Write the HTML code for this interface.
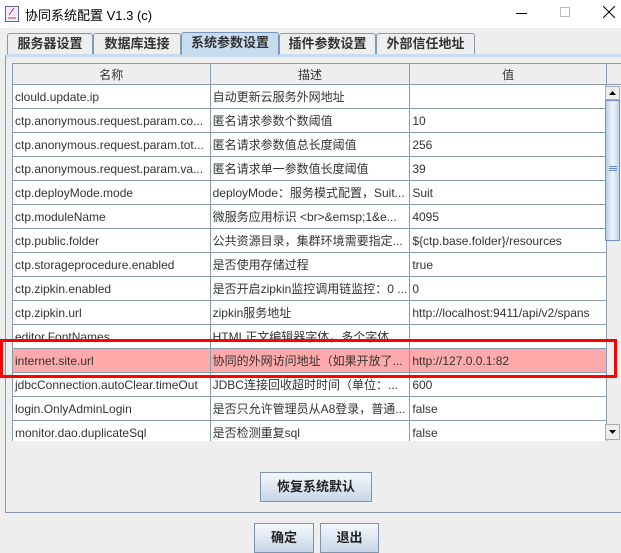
<!DOCTYPE html>
<html><head><meta charset="utf-8"><style>
*{margin:0;padding:0;box-sizing:border-box}
body{width:621px;height:543px;background:#eeeeee;font-family:"Liberation Sans","Noto Sans CJK SC",sans-serif;font-size:12px;color:#333;position:relative;overflow:hidden}
.title{position:absolute;left:0;top:0;width:621px;height:28px;background:#fff}
.title span{position:absolute;left:25px;top:5px;font-size:13px;color:#000}
.tab{position:absolute;top:33px;height:21px;border:1px solid #8899aa;border-bottom:none;background:#eeeeee;font-weight:bold;font-size:13px;text-align:center;line-height:19px;color:#333;border-radius:3px 3px 0 0}
.tab.sel{background:#c8dcf0;border-color:#7a95c0;top:32px;height:23px}
.panel{position:absolute;left:5px;top:54px;width:620px;height:459px;border:1px solid #8899aa;border-top:3px solid #c8dcf0;background:#eeeeee}
.wrap{position:absolute;left:12px;top:63px;width:610px;height:378px;overflow:hidden}
table{border-collapse:collapse;table-layout:fixed;background:#fff}
td,th{border:1px solid #8a9bb0;height:24px;padding:0 2px;white-space:nowrap;overflow:hidden;font-weight:normal;font-size:12px;color:#333}
th{background:#eeeeee;height:21px;text-align:center}
tr.hl td{background:#ffaaaa}
.btn{position:absolute;height:30px;border:1px solid #7f93ac;background:linear-gradient(#f4f8fc,#c8d6e6);font-weight:bold;font-size:13px;text-align:center;line-height:28px;color:#222}
</style></head><body>
<div class="title"><svg style="position:absolute;left:5px;top:6px" width="14" height="16"><rect x="0.5" y="0.5" width="13" height="15" fill="#eef" stroke="#668"/><path d="M3 12h8M4 9q3-4 5-7" stroke="#c33" fill="none"/></svg><span>协同系统配置 V1.3 (c)</span>
<div style="position:absolute;left:516px;top:13px;width:11px;height:1px;background:#000"></div>
<div style="position:absolute;left:560px;top:7px;width:10px;height:10px;border:1px solid #bbb"></div>
<svg style="position:absolute;left:603px;top:6px" width="12" height="12"><path d="M0 0L12 12M12 0L0 12" stroke="#000"/></svg></div>
<div class="panel"></div>
<div class="tab" style="left:7px;width:86px">服务器设置</div>
<div class="tab" style="left:93px;width:88px">数据库连接</div>
<div class="tab sel" style="left:181px;width:98px">系统参数设置</div>
<div class="tab" style="left:279px;width:97px">插件参数设置</div>
<div class="tab" style="left:376px;width:99px">外部信任地址</div>
<div class="wrap"><table>
<colgroup><col style="width:198px"><col style="width:197px"><col style="width:198px"><col style="width:16px"></colgroup>
<tr><th>名称</th><th>描述</th><th>值</th><th style="border-left:1px solid #aaa"></th></tr>
<tr><td>clould.update.ip</td><td>自动更新云服务外网地址</td><td></td><td rowspan="15" style="padding:0;background:#eee;vertical-align:top;position:relative"></td></tr>
<tr><td>ctp.anonymous.request.param.co...</td><td>匿名请求参数个数阈值</td><td>10</td></tr>
<tr><td>ctp.anonymous.request.param.tot...</td><td>匿名请求参数值总长度阈值</td><td>256</td></tr>
<tr><td>ctp.anonymous.request.param.va...</td><td>匿名请求单一参数值长度阈值</td><td>39</td></tr>
<tr><td>ctp.deployMode.mode</td><td>deployMode：服务模式配置，Suit...</td><td>Suit</td></tr>
<tr><td>ctp.moduleName</td><td>微服务应用标识 &lt;br&gt;&amp;emsp;1&amp;e...</td><td>4095</td></tr>
<tr><td>ctp.public.folder</td><td>公共资源目录，集群环境需要指定...</td><td>${ctp.base.folder}/resources</td></tr>
<tr><td>ctp.storageprocedure.enabled</td><td>是否使用存储过程</td><td>true</td></tr>
<tr><td>ctp.zipkin.enabled</td><td>是否开启zipkin监控调用链监控：0 ...</td><td>0</td></tr>
<tr><td>ctp.zipkin.url</td><td>zipkin服务地址</td><td>http://localhost:9411/api/v2/spans</td></tr>
<tr><td>editor.FontNames</td><td>HTML正文编辑器字体，多个字体...</td><td></td></tr>
<tr class="hl"><td>internet.site.url</td><td>协同的外网访问地址（如果开放了...</td><td>http://127.0.0.1:82</td></tr>
<tr><td>jdbcConnection.autoClear.timeOut</td><td>JDBC连接回收超时时间（单位：...</td><td>600</td></tr>
<tr><td>login.OnlyAdminLogin</td><td>是否只允许管理员从A8登录，普通...</td><td>false</td></tr>
<tr><td>monitor.dao.duplicateSql</td><td>是否检测重复sql</td><td>false</td></tr>
</table></div>
<div style="position:absolute;left:605px;top:86px;width:15px;height:14px;background:#eee;border:1px solid #aab"><svg width="13" height="12"><path d="M3 8h7L6.5 4z" fill="#000"/></svg></div>
<div style="position:absolute;left:605px;top:100px;width:15px;height:141px;background:linear-gradient(90deg,#b8cfe8,#eef4fb,#c0d4ea);border:1px solid #7090c8"><div style="position:absolute;left:3px;top:65px;width:8px;height:5px;border-top:1px solid #6688cc;border-bottom:1px solid #6688cc"><div style="margin-top:1px;height:1px;background:#6688cc"></div></div></div>
<div style="position:absolute;left:605px;top:424px;width:15px;height:16px;background:#eee;border:1px solid #aab"><svg width="13" height="14"><path d="M3 5h7L6.5 9z" fill="#000"/></svg></div>
<div style="position:absolute;left:0;top:339px;width:617px;height:39px;border:3px solid #ff0000"></div>
<div class="btn" style="left:260px;top:472px;width:112px">恢复系统默认</div>
<div class="btn" style="left:254px;top:523px;width:60px">确定</div>
<div class="btn" style="left:320px;top:523px;width:59px">退出</div>
</body></html>
